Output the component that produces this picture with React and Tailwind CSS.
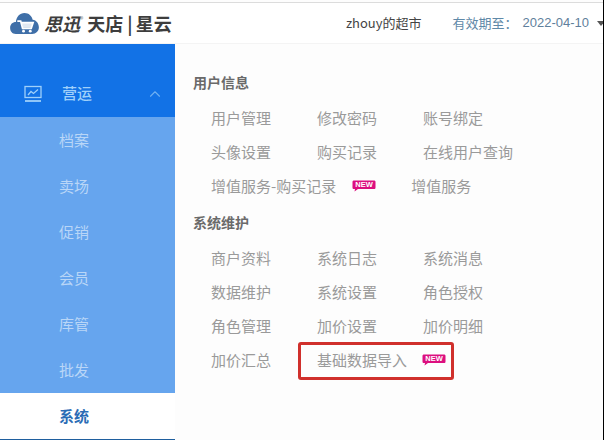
import React from 'react';
import { ChevronUp } from 'lucide-react';

const cjk = { fontFamily: '"Noto Sans CJK SC", "Noto Sans", sans-serif' };

const subMenu = ['档案', '卖场', '促销', '会员', '库管', '批发'];

const userRows = [
  ['用户管理', '修改密码', '账号绑定'],
  ['头像设置', '购买记录', '在线用户查询'],
];

const systemRows = [
  ['商户资料', '系统日志', '系统消息'],
  ['数据维护', '系统设置', '角色授权'],
  ['角色管理', '加价设置', '加价明细'],
];

function Logo() {
  return (
    <svg width="31" height="23" viewBox="0 0 32 24">
      <path d="M7 23C3 23 1 20 1 16.500C1 13 3.500 10.500 7 10.500C7.500 5 11 1 16 1C20.500 1 23.500 4 24.500 8C28.500 8.500 31 12 31 16C31 20 28 23 24 23Z" fill="#3f6fa8" />
      <path d="M8.500 9.500H12L14 17H23L25 11H12.800" fill="none" stroke="#fff" strokeWidth="1.800" />
      <path d="M13 11.500H24.500L23 16.500H14.300Z" fill="#fff" opacity="0.85" />
      <circle cx="15" cy="20" r="1.500" fill="#fff" />
      <circle cx="22" cy="20" r="1.500" fill="#fff" />
    </svg>
  );
}

function NewBadge() {
  return (
    <svg width="24" height="12" viewBox="0 0 24 12" className="shrink-0">
      <path d="M2 0.500H22C23 0.500 23.500 1 23.500 2V7.500C23.500 8.500 23 9 22 9H6L2.500 11.500L3 9H2C1 9 0.500 8.500 0.500 7.500V2C0.500 1 1 0.500 2 0.500Z" fill="#dc0f7f" />
      <text x="12" y="7.400" textAnchor="middle" fontSize="7.500" fontWeight="700" fill="#fff" style={{ fontFamily: '"Liberation Sans", sans-serif' }}>NEW</text>
    </svg>
  );
}

function LinkGrid({ rows }) {
  return (
    <div className="flex flex-col">
      {rows.map((row) => (
        <div key={row[0]} className="flex h-[34px] items-center">
          {row.map((label) => (
            <span key={label} className="w-[106px] whitespace-nowrap text-[15px] text-[#9a9a9a]">{label}</span>
          ))}
        </div>
      ))}
    </div>
  );
}

export default function App() {
  return (
    <div className="flex h-[440px] w-[604px] flex-col overflow-hidden border-r border-r-black bg-[#fdfdfd]" style={cjk}>
      {/* Top bar */}
      <header className="mt-[2px] flex h-[42px] shrink-0 items-center border-t border-t-[#dcdcdc] border-b border-b-[#f4f4f4] bg-white">
        <div className="ml-[9px] flex items-center">
          <Logo />
          <span className="ml-[4px] text-[18px] leading-none font-bold italic text-[#3d3d3d]">思迅</span>
          <span className="mb-2 text-[7px] leading-none text-[#777]">®</span>
          <span className="ml-[4px] text-[18px] leading-none font-bold text-[#3d3d3d]">天店</span>
          <span className="ml-[4px] text-[18px] leading-none font-bold text-[#3d3d3d]">|</span>
          <span className="ml-[3px] text-[18px] leading-none font-bold text-[#3d3d3d]">星云</span>
        </div>
        <span className="ml-auto text-[13px] text-[#444]">zhouy的超市</span>
        <span className="ml-[31px] text-[13px] text-[#5f89a8]">有效期至：</span>
        <span className="ml-[5px] text-[13px] text-[#5f7f9c]" style={{ fontFamily: '"Liberation Sans", sans-serif' }}>2022-04-10</span>
        <span className="mr-[-2px] ml-[8px] h-0 w-0 border-x-[4px] border-t-[5px] border-x-transparent border-t-[#555]" />
      </header>

      <div className="flex min-h-0 flex-1">
        {/* Side menu */}
        <aside className="flex w-[175px] shrink-0 flex-col bg-[#1272e6]">
          <div className="flex h-[73px] items-center pt-[26px] pr-[11px] pl-[24px] text-[#9fd0fa]">
            <svg width="18" height="18" viewBox="0 0 18 18" fill="none" stroke="currentColor" strokeWidth="1.300">
              <rect x="1" y="1.500" width="16" height="11" />
              <path d="M4 10L7 6.500L9.500 8.500L14 4.500" />
              <path d="M1 16H17" strokeWidth="1.800" />
            </svg>
            <span className="ml-[20px] text-[15px] font-medium">营运</span>
            <ChevronUp size={18} strokeWidth={1.500} className="ml-auto text-[#6fb0f2]" />
          </div>
          <nav className="flex flex-1 flex-col bg-[#66a5ee]">
            {subMenu.map((label) => (
              <div key={label} className="flex h-[46px] items-center pl-[59px] text-[15px] text-[#b9d6f7]">{label}</div>
            ))}
            <div className="flex h-[47px] items-center border-b border-b-[#1f5f9e] bg-white pl-[59px] text-[15px] font-bold text-[#2a6cb5]">系统</div>
          </nav>
        </aside>

        {/* Feature links */}
        <main className="relative flex-1 pt-[26px] pl-[18px]">
          <h2 className="h-[24px] text-[14px] leading-[24px] font-bold text-[#6a6a6a]">用户信息</h2>
          <div className="mt-[7px] pl-[18px]">
            <LinkGrid rows={userRows} />
            <div className="flex h-[34px] items-center text-[15px] text-[#9a9a9a]">
              <span className="whitespace-nowrap">增值服务-购买记录</span>
              <span className="ml-[16px]"><NewBadge /></span>
              <span className="ml-[35px] whitespace-nowrap">增值服务</span>
            </div>
          </div>
          <h2 className="mt-[7px] h-[24px] text-[14px] leading-[24px] font-bold text-[#6a6a6a]">系统维护</h2>
          <div className="mt-[7px] pl-[18px]">
            <LinkGrid rows={systemRows} />
            <div className="flex h-[34px] items-center text-[15px] text-[#9a9a9a]">
              <span className="w-[106px]">加价汇总</span>
              <span className="whitespace-nowrap">基础数据导入</span>
              <span className="ml-[15px]"><NewBadge /></span>
            </div>
          </div>
          {/* red highlight drawn over the screenshot */}
          <div className="absolute top-[298px] left-[123px] h-[38px] w-[156px] rounded-[3px] border-[3px] border-[#d0302c]" />
        </main>
      </div>
    </div>
  );
}
